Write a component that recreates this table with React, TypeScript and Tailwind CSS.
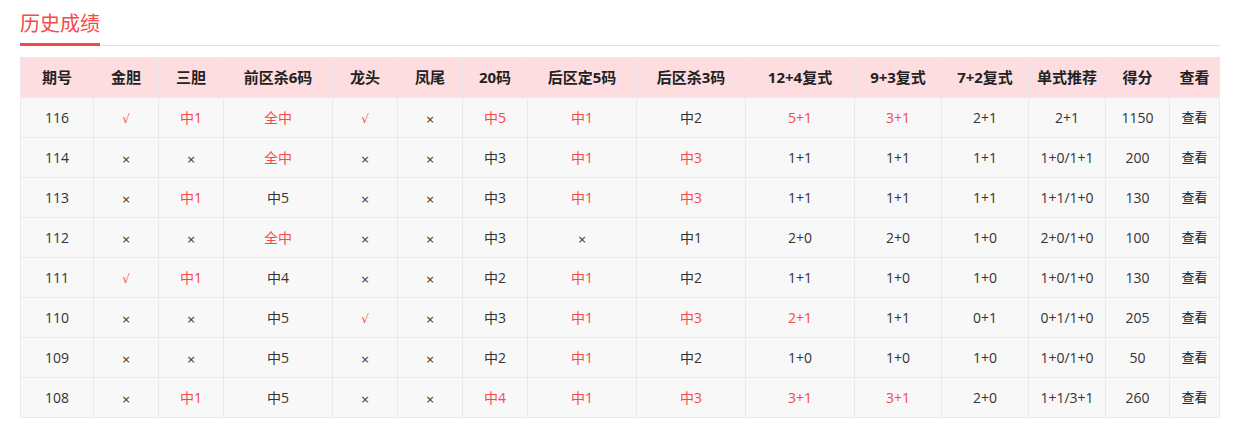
import React from 'react';

type Cell = string | [string];

const headers = ['期号', '金胆', '三胆', '前区杀6码', '龙头', '凤尾', '20码', '后区定5码', '后区杀3码', '12+4复式', '9+3复式', '7+2复式', '单式推荐', '得分', '查看'];
const widths = ['w-[73px]', 'w-[65px]', 'w-[65px]', 'w-[109px]', 'w-[65px]', 'w-[65px]', 'w-[65px]', 'w-[109px]', 'w-[109px]', 'w-[109px]', 'w-[87px]', 'w-[87px]', 'w-[77px]', 'w-[64px]', 'w-[50px]'];

// [text] = hit, shown in red
const rows: Cell[][] = [
  ['116', ['√'], ['中1'], ['全中'], ['√'], '×', ['中5'], ['中1'], '中2', ['5+1'], ['3+1'], '2+1', '2+1', '1150'],
  ['114', '×', '×', ['全中'], '×', '×', '中3', ['中1'], ['中3'], '1+1', '1+1', '1+1', '1+0/1+1', '200'],
  ['113', '×', ['中1'], '中5', '×', '×', '中3', ['中1'], ['中3'], '1+1', '1+1', '1+1', '1+1/1+0', '130'],
  ['112', '×', '×', ['全中'], '×', '×', '中3', '×', '中1', '2+0', '2+0', '1+0', '2+0/1+0', '100'],
  ['111', ['√'], ['中1'], '中4', '×', '×', '中2', ['中1'], '中2', '1+1', '1+0', '1+0', '1+0/1+0', '130'],
  ['110', '×', '×', '中5', ['√'], '×', '中3', ['中1'], ['中3'], ['2+1'], '1+1', '0+1', '0+1/1+0', '205'],
  ['109', '×', '×', '中5', '×', '×', '中2', ['中1'], '中2', '1+0', '1+0', '1+0', '1+0/1+0', '50'],
  ['108', '×', ['中1'], '中5', '×', '×', ['中4'], ['中1'], ['中3'], ['3+1'], ['3+1'], '2+0', '1+1/3+1', '260'],
];

const font = { fontFamily: '"Open Sans", "Noto Sans CJK SC", sans-serif' };

const Mark: React.FC<{ text: string }> = ({ text }) => {
  if (text === '√') return <span className="font-['DejaVu_Sans'] text-[12px]">√</span>;
  if (text === '×') return <span className="font-['DejaVu_Sans'] text-[11px]">×</span>;
  return <>{text}</>;
};

const HistoryTable: React.FC = () => {
  return (
    <div className="w-[1220px] bg-white pl-[20px]" style={font}>
      <div className="border-b border-[#f0dadb] pt-[9px]">
        <span className="inline-block -mb-px border-b-[3px] border-[#f5484a] pb-[6px] text-[20px] leading-[28px] text-[#f5484a]" style={{ fontFamily: '"Noto Sans CJK SC", sans-serif' }}>
          历史成绩
        </span>
      </div>

      <table className="mt-[11px] w-[1200px] table-fixed border-collapse text-center">
        <thead>
          <tr className="h-[40px] bg-[#fddde0]">
            {headers.map((h, i) => (
              <th key={h} className={`${widths[i]} border border-[#e8eaf1] p-0 text-[15px] font-bold text-[#222]`}>
                {h}
              </th>
            ))}
          </tr>
        </thead>
        <tbody>
          {rows.map((row) => (
            <tr key={row[0] as string} className="h-[40px] bg-[#f8f8f8]">
              {row.map((c, i) => {
                const hit = Array.isArray(c);
                const text = hit ? c[0] : c;
                return (
                  <td
                    key={i}
                    className={`border border-[#e8eaf1] p-0 text-[14px] ${hit ? 'text-[#f5484a]' : 'text-[#333]'}`}
                  >
                    <Mark text={text} />
                  </td>
                );
              })}
              <td className="border border-[#e8eaf1] p-0 text-[13px] text-[#222] cursor-pointer">查看</td>
            </tr>
          ))}
        </tbody>
      </table>
    </div>
  );
};

export default function App() {
  return <HistoryTable />;
}
